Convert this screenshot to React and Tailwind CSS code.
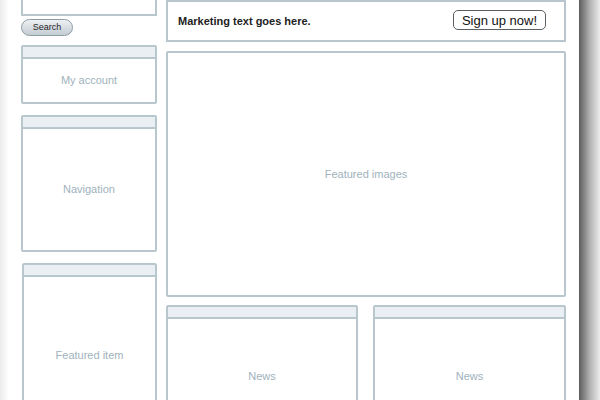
const Panel = ({ label, className, bodyClass = '' }) => (
  <div className={`shrink-0 flex flex-col border-2 border-[#b8c7ce] rounded-[2px] bg-white ${className}`}>
    <div className="h-[12px] shrink-0 bg-[#e9eff3] border-b-2 border-[#b8c7ce]" />
    <div className={`flex-1 flex items-center justify-center text-[11px] text-[#a0b2bc] ${bodyClass}`}>
      {label}
    </div>
  </div>
);

const App = () => {
  return (
    <div
      className="relative w-[600px] h-[400px] overflow-hidden bg-white flex"
      style={{ fontFamily: '"Liberation Sans", Arial, sans-serif' }}
    >
      <div className="w-[579px] shrink-0 h-full flex bg-white relative">
        <div className="absolute left-0 top-0 w-[9px] h-full bg-gradient-to-r from-[#ececec] to-white" />

        {/* left column */}
        <div className="relative ml-[21px] w-[136px] shrink-0 flex flex-col">
          <div className="shrink-0 -mt-[3px] h-[19px] border-2 border-[#b8c7ce] bg-white" />
          <button className="shrink-0 mt-[3px] w-[52px] h-[17px] rounded-full border border-[#8d9da6] bg-gradient-to-b from-[#eef1f3] to-[#c3ccd2] text-[9px] text-[#1f2328] leading-none flex items-center justify-center">
            Search
          </button>
          <Panel label="My account" className="mt-[9px] h-[59px]" />
          <Panel label="Navigation" className="mt-[11px] h-[137px]" />
          <Panel label="Featured item" className="mt-[11px] ml-[1px] h-[172px]" />
        </div>

        {/* right column */}
        <div className="ml-[9px] w-[400px] shrink-0 flex flex-col">
          <div className="shrink-0 h-[42px] border-2 border-[#b8c7ce] flex items-center justify-between pl-[10px] pr-[18px]">
            <span className="text-[11px] font-bold text-[#222]">Marketing text goes here.</span>
            <button className="h-[20px] w-[93px] mt-[-2px] rounded-[5px] border-[1.5px] border-[#5a5f63] text-[13px] text-[#111] leading-none flex items-center justify-center">
              Sign up now!
            </button>
          </div>
          <div className="shrink-0 mt-[9px] h-[246px] border-2 border-[#b8c7ce] rounded-[2px] flex items-center justify-center">
            <span className="text-[11px] text-[#a0b2bc]">Featured images</span>
          </div>
          <div className="shrink-0 mt-[8px] flex gap-[15px]">
            <Panel label="News" className="w-[192px] h-[130px]" />
            <Panel label="News" className="w-[193px] h-[130px]" />
          </div>
        </div>
      </div>
      <div className="w-[21px] shrink-0 h-full bg-gradient-to-r from-[#5c5c5c] via-[#b0b0b0] to-[#ececec]" />
    </div>
  );
};

export default App;
